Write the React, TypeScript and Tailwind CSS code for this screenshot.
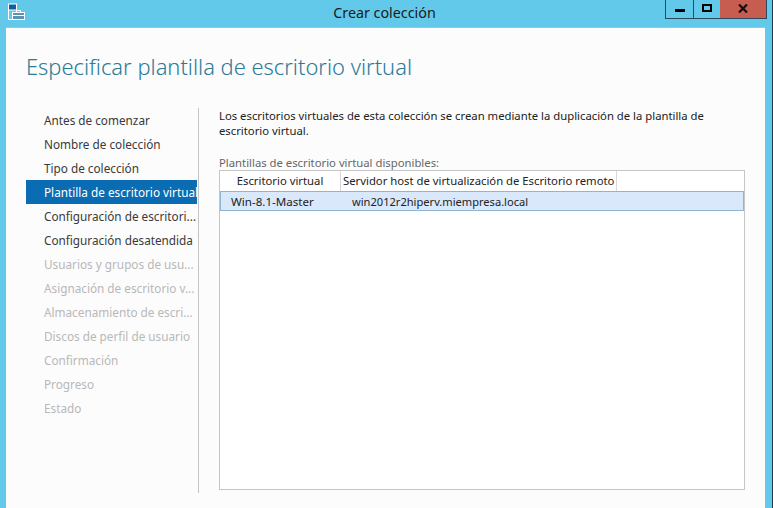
const font = { fontFamily: '"Noto Sans", "Open Sans", sans-serif' };

const steps: [string, "on" | "sel" | "off"][] = [
  ["Antes de comenzar", "on"],
  ["Nombre de colección", "on"],
  ["Tipo de colección", "on"],
  ["Plantilla de escritorio virtual", "sel"],
  ["Configuración de escritori...", "on"],
  ["Configuración desatendida", "on"],
  ["Usuarios y grupos de usu...", "off"],
  ["Asignación de escritorio v...", "off"],
  ["Almacenamiento de escri...", "off"],
  ["Discos de perfil de usuario", "off"],
  ["Confirmación", "off"],
  ["Progreso", "off"],
  ["Estado", "off"],
];

function AppIcon() {
  return (
    <svg width="17" height="17" viewBox="0 0 17 17" className="ml-[2px] mt-[3px]" fill="none">
      <rect x="0.5" y="1" width="8" height="6" fill="#0f5f9e" />
      <rect x="0.5" y="1" width="8" height="15.5" stroke="#fff" fill="none" />
      <path d="M1 7H8" stroke="#fff" />
      <rect x="4.5" y="9.5" width="12" height="7" fill="#5b93b6" stroke="#fff" />
      <path d="M8.5 9.5V7.5H12.5V9.5M4.5 12.5H16.5" stroke="#fff" />
    </svg>
  );
}

export default function App() {
  return (
    <div style={font} className="w-[773px] h-[508px] bg-[#62c9ea] flex flex-col overflow-hidden text-[11.3px] border-r border-[#24384a]">
      <div className="h-[27px] shrink-0 flex items-start relative">
        <div className="w-[6px]" />
        <AppIcon />
        <div className="absolute left-0 right-0 top-[4px] text-center text-[14.3px] leading-[18px] text-[#1a1a1a] pr-[3px]">
          Crear colección
        </div>
        <div className="ml-auto mr-[5px] flex h-[19px] border border-t-0 border-[#2c4a5c]">
          <div className="w-[28px] border-r border-[#2c4a5c] flex items-center justify-center">
            <div className="w-[10px] h-[3px] bg-black mt-[3px]" />
          </div>
          <div className="w-[26px] flex items-center justify-center">
            <div className="w-[10px] h-[8px] border-2 border-black mb-[3px]" />
          </div>
          <div className="w-[46px] bg-[#c75c50] flex items-center justify-center">
            <svg width="10" height="9" viewBox="0 0 10 9" className="mb-[2px]">
              <path d="M1 0.5L9 8.5M9 0.5L1 8.5" stroke="#111" strokeWidth="2.2" />
            </svg>
          </div>
        </div>
      </div>
      <div className="ml-[6px] mr-[7px] flex-1 bg-[#fcfcfc] flex flex-col border-t border-[#9fc4d2]">
        <div className="h-[80px] shrink-0 pl-[20px] pt-[24px] text-[21.9px] leading-[30px] font-light text-[#2a7a98] whitespace-nowrap">
          Especificar plantilla de escritorio virtual
        </div>
        <div className="flex h-[385px]">
          <div className="w-[171px] ml-[20px] shrink-0 text-[11.75px]">
            {steps.map(([t, s]) => (
              <div
                key={t}
                className={
                  "h-[24px] pl-[18px] leading-[24px] whitespace-nowrap " +
                  (s === "sel"
                    ? "bg-[#0a6cb3] text-white"
                    : s === "on"
                      ? "text-[#3a3a3a]"
                      : "text-[#b8b8b8]")
                }
              >
                {t}
              </div>
            ))}
          </div>
          <div className="w-[1px] ml-[1px] bg-[#c4c4c4] shrink-0" />
          <div className="w-[526px] ml-[20px] flex flex-col shrink-0">
            <p className="text-[#222] leading-[15px] mb-[17px]">
              Los escritorios virtuales de esta colección se crean mediante la duplicación de la plantilla de
              <br />
              escritorio virtual.
            </p>
            <div className="text-[#666] leading-[16px] h-[15px]">Plantillas de escritorio virtual disponibles:</div>
            <div className="h-[320px] border border-[#c6c6c6] bg-white flex flex-col">
              <div className="h-[20px] flex text-[#222] leading-[20px] shrink-0">
                <div className="w-[121px] text-center border-r border-[#d8d8d8]">Escritorio virtual</div>
                <div className="w-[276px] pl-[2px] border-r border-[#d8d8d8] whitespace-nowrap">
                  Servidor host de virtualización de Escritorio remoto
                </div>
              </div>
              <div className="h-[20px] flex bg-[#d9e8fb] border border-[#90b4d2] text-[#222] leading-[19px] whitespace-nowrap">
                <div className="w-[131px] pl-[10px] text-[11.6px]">Win-8.1-Master</div>
                <div className="text-[11.1px]">win2012r2hiperv.miempresa.local</div>
              </div>
            </div>
          </div>
        </div>
        <div className="flex-1" />
      </div>
    </div>
  );
}
